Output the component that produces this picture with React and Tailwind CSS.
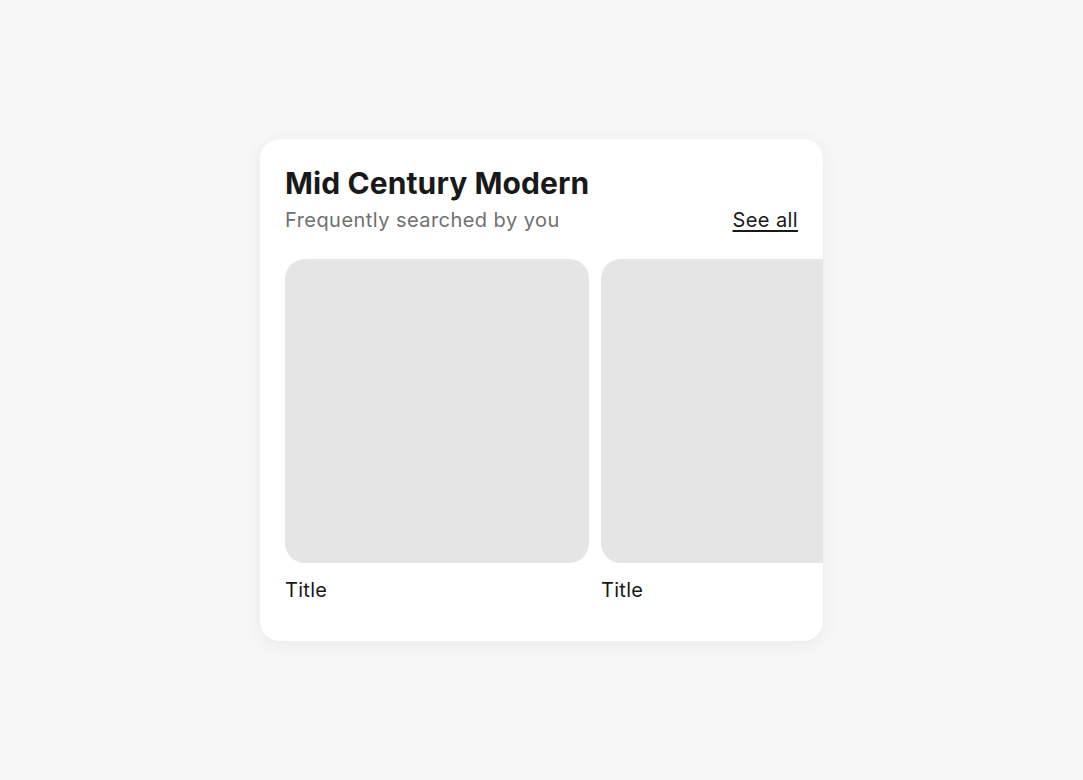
export default function App() {
  return (
    <div className="min-h-screen w-full bg-[#f7f7f7] flex items-start justify-center pt-[139px]" style={{ fontFamily: 'Inter, "Liberation Sans", sans-serif' }}>
      <div className="w-[563px] h-[502px] bg-white rounded-[20px] shadow-[0_4px_20px_rgba(0,0,0,0.06)] overflow-hidden pt-[26px] pl-[25px]">
        <h2 className="text-[30px] leading-[36px] font-bold text-[#191919] tracking-[0.1px]">Mid Century Modern</h2>
        <div className="flex items-baseline justify-between pr-[25px] mt-[6px]">
          <p className="text-[20px] leading-[26px] text-[#707070] tracking-[0.45px]">Frequently searched by you</p>
          <a href="#" className="text-[20px] leading-[26px] text-[#191919] tracking-[0.4px] underline underline-offset-[3px] decoration-[1.5px]">See all</a>
        </div>
        <div className="flex gap-[12px] mt-[26px]">
          <div className="shrink-0 w-[304px]">
            <div className="w-[304px] h-[304px] rounded-[20px] bg-[#e5e5e5]"></div>
            <p className="mt-[14px] text-[20px] leading-[26px] text-[#191919] tracking-[0.3px]">Title</p>
          </div>
          <div className="shrink-0 w-[304px]">
            <div className="w-[304px] h-[304px] rounded-[20px] bg-[#e5e5e5]"></div>
            <p className="mt-[14px] text-[20px] leading-[26px] text-[#191919] tracking-[0.3px]">Title</p>
          </div>
        </div>
      </div>
    </div>
  );
}
